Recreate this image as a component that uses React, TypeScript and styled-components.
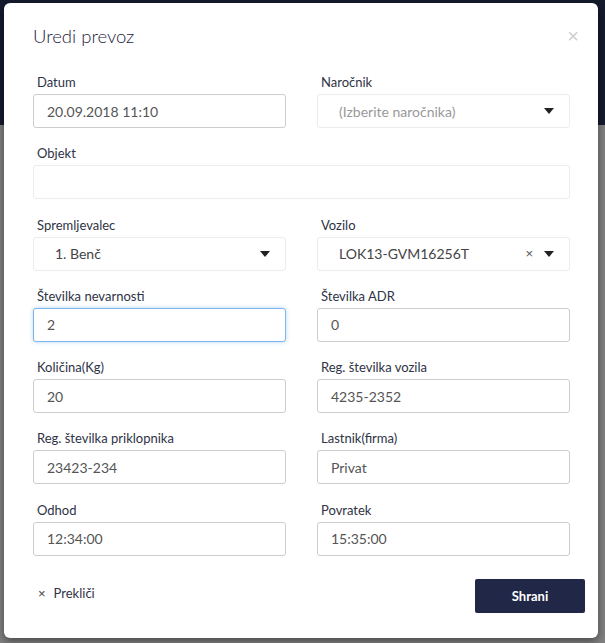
import React from 'react';
import styled, { createGlobalStyle, css } from 'styled-components';

const GlobalStyle = createGlobalStyle`
  html, body {
    margin: 0;
    padding: 0;
  }
  body {
    font-family: Lato, "Open Sans", Arial, sans-serif;
    background: #7d7d7d;
  }
`;

const Backdrop = styled.div`
  width: 605px;
  height: 643px;
  box-sizing: border-box;
  padding: 3px 7px 5px 4px;
  background: linear-gradient(#151a2d 0, #151a2d 125px, #808080 125px);
  display: flex;
  overflow: hidden;
`;

const Modal = styled.div`
  flex: 1;
  background: #fff;
  border-radius: 6px;
  box-shadow: 0 3px 9px rgba(0, 0, 0, 0.45);
  display: flex;
  flex-direction: column;
`;

const Header = styled.div`
  display: flex;
  justify-content: space-between;
  align-items: center;
  padding: 21px 19px 0 29px;
`;

const Title = styled.h4`
  margin: 0;
  font-size: 18.5px;
  line-height: 24px;
  font-weight: 300;
  color: #1c2240;
`;

const CloseButton = styled.button`
  border: none;
  background: none;
  padding: 0;
  color: #cfcfcf;
  font-size: 20px;
  line-height: 20px;
  font-family: Arial, sans-serif;
  cursor: pointer;
`;

const Form = styled.div`
  display: grid;
  grid-template-columns: 253px 253px;
  column-gap: 31px;
  row-gap: 16.3px;
  padding: 25px 28px 0 29px;
`;

const Field = styled.div<{ $wide?: boolean }>`
  display: flex;
  flex-direction: column;
  gap: 3px;
  ${p => p.$wide && css`grid-column: 1 / span 2;`}
`;

const Label = styled.label`
  font-size: 13px;
  line-height: 18px;
  color: #2e3345;
  padding-left: 4px;
`;

const Input = styled.input<{ $focused?: boolean }>`
  box-sizing: border-box;
  height: 34px;
  width: 100%;
  border: 1px solid #cdcdcd;
  border-radius: 3px;
  padding: 0 13px;
  font-family: inherit;
  font-size: 14px;
  color: #555;
  outline: none;
  ${p => p.$focused && css`
    border-color: #7fb5ea;
    box-shadow: 0 0 4px rgba(102, 175, 233, 0.5);
  `}
`;

const SelectBox = styled.div`
  box-sizing: border-box;
  height: 34px;
  border: 1px solid #ececec;
  border-radius: 3px;
  display: flex;
  align-items: center;
  padding: 0 15px 0 21px;
  font-size: 14px;
  color: #444;
`;

const SelectValue = styled.span<{ $placeholder?: boolean }>`
  flex: 1;
  color: ${p => (p.$placeholder ? '#999' : '#444')};
`;

const Clear = styled.span`
  font-family: Arial, sans-serif;
  font-size: 13px;
  color: #555;
  margin-right: 11px;
`;

const Caret = styled.span`
  width: 0;
  height: 0;
  border-left: 5px solid transparent;
  border-right: 5px solid transparent;
  border-top: 6px solid #222;
`;

const Footer = styled.div`
  margin-top: auto;
  display: flex;
  justify-content: space-between;
  align-items: center;
  padding: 0 13px 25px 34px;
`;

const CancelButton = styled.button`
  border: none;
  background: none;
  display: flex;
  align-items: center;
  gap: 8px;
  padding: 0;
  font-family: inherit;
  font-size: 13px;
  color: #2e3345;
  cursor: pointer;
  margin-top: -6px;
`;

const CancelX = styled.span`
  font-family: Arial, sans-serif;
  font-size: 13px;
  color: #444;
`;

const SaveButton = styled.button`
  width: 110px;
  height: 34px;
  border: none;
  border-radius: 2px;
  background: #212746;
  color: #fff;
  font-family: inherit;
  font-size: 13px;
  font-weight: 700;
  cursor: pointer;
`;

type Select = { placeholder?: boolean; clearable?: boolean };

const fields: { label: string; value: string; select?: Select; wide?: boolean; focused?: boolean }[] = [
  { label: 'Datum', value: '20.09.2018 11:10' },
  { label: 'Naročnik', value: '(Izberite naročnika)', select: { placeholder: true } },
  { label: 'Objekt', value: '', wide: true },
  { label: 'Spremljevalec', value: '1. Benč', select: {} },
  { label: 'Vozilo', value: 'LOK13-GVM16256T', select: { clearable: true } },
  { label: 'Številka nevarnosti', value: '2', focused: true },
  { label: 'Številka ADR', value: '0' },
  { label: 'Količina(Kg)', value: '20' },
  { label: 'Reg. številka vozila', value: '4235-2352' },
  { label: 'Reg. številka priklopnika', value: '23423-234' },
  { label: 'Lastnik(firma)', value: 'Privat' },
  { label: 'Odhod', value: '12:34:00' },
  { label: 'Povratek', value: '15:35:00' },
];

export default function App() {
  return (
    <>
      <GlobalStyle />
      <Backdrop>
        <Modal>
          <Header>
            <Title>Uredi prevoz</Title>
            <CloseButton aria-label="Zapri">×</CloseButton>
          </Header>

          <Form>
            {fields.map(f => (
              <Field key={f.label} $wide={f.wide}>
                <Label>{f.label}</Label>
                {f.select ? (
                  <SelectBox>
                    <SelectValue $placeholder={f.select.placeholder}>{f.value}</SelectValue>
                    {f.select.clearable && <Clear>×</Clear>}
                    <Caret />
                  </SelectBox>
                ) : f.wide ? (
                  <SelectBox />
                ) : (
                  <Input defaultValue={f.value} $focused={f.focused} autoFocus={f.focused} />
                )}
              </Field>
            ))}
          </Form>

          <Footer>
            <CancelButton>
              <CancelX>×</CancelX>
              Prekliči
            </CancelButton>
            <SaveButton>Shrani</SaveButton>
          </Footer>
        </Modal>
      </Backdrop>
    </>
  );
}
